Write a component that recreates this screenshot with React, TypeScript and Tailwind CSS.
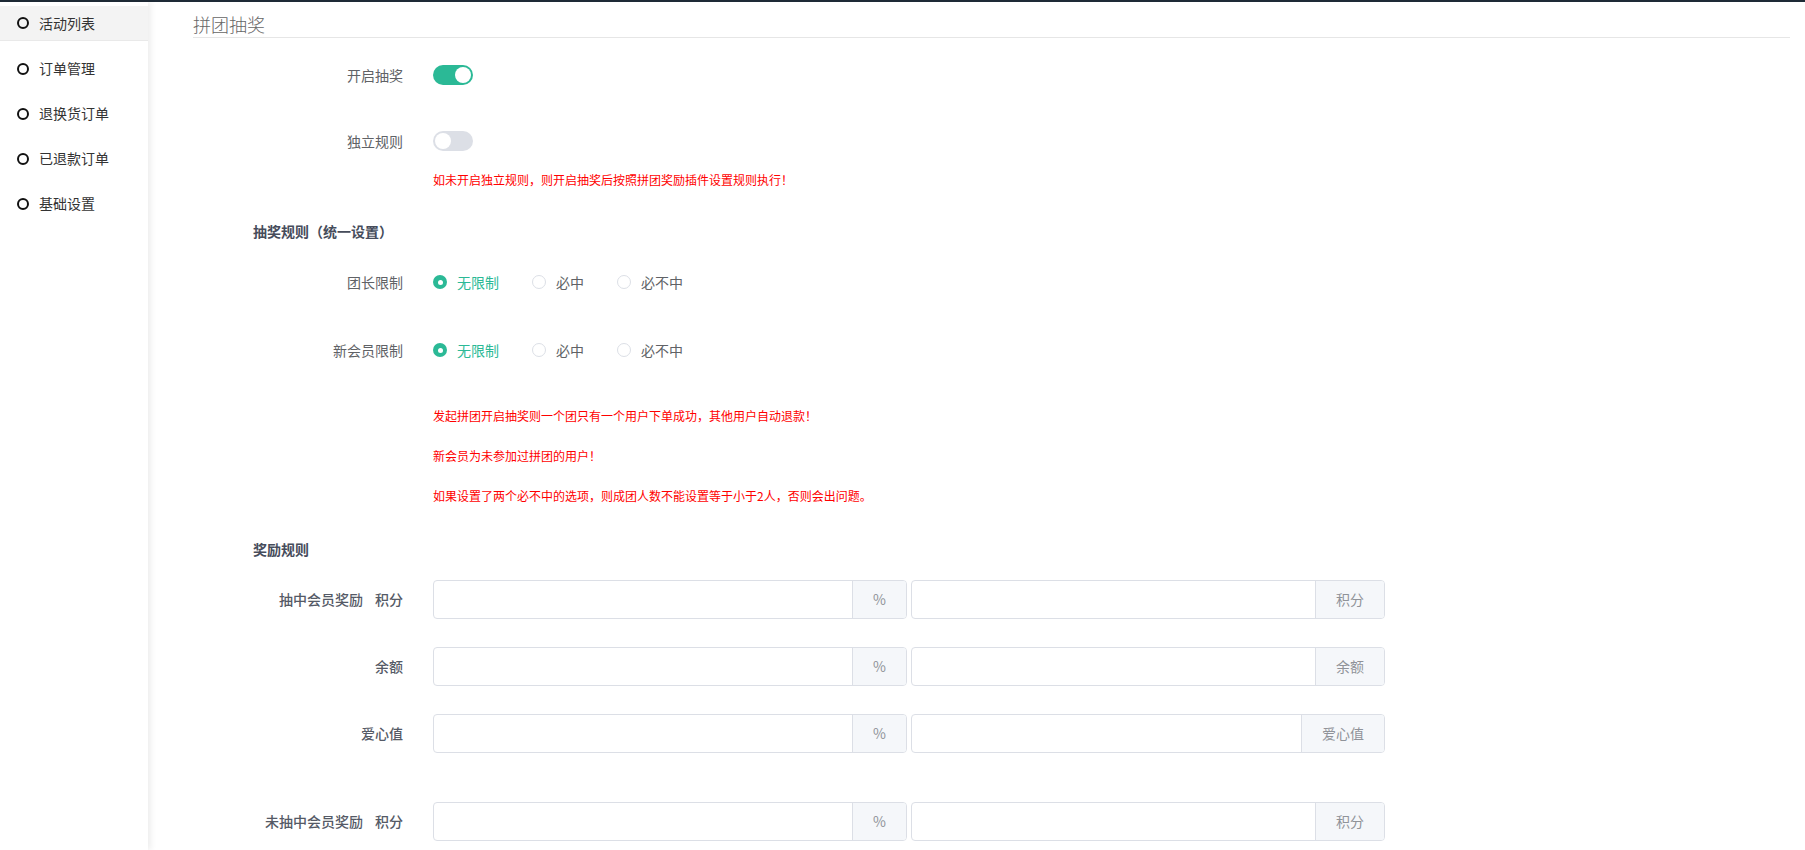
import React from 'react';

const menu = ['活动列表', '订单管理', '退换货订单', '已退款订单', '基础设置'];

function Toggle({ on }: { on: boolean }) {
  return (
    <span className={on ? 'relative inline-block w-[40px] h-[20px] rounded-full bg-[#2bb996]' : 'relative inline-block w-[40px] h-[20px] rounded-full bg-[#dcdfe6]'}>
      <span className={on ? 'absolute top-[2px] left-[22px] w-[16px] h-[16px] rounded-full bg-white' : 'absolute top-[2px] left-[2px] w-[16px] h-[16px] rounded-full bg-white'} />
    </span>
  );
}

function Radio({ label, checked }: { label: string; checked?: boolean }) {
  return (
    <label className="flex items-center mr-[33px] cursor-pointer">
      {checked ? (
        <span className="w-[14px] h-[14px] rounded-full bg-[#2bb996] flex items-center justify-center">
          <span className="w-[5px] h-[5px] rounded-full bg-white" />
        </span>
      ) : (
        <span className="w-[14px] h-[14px] rounded-full border border-[#dcdfe6] bg-white" />
      )}
      <span className={checked ? 'pl-[10px] text-[14px] text-[#2bb996]' : 'pl-[10px] text-[14px] text-[#606266]'}>{label}</span>
    </label>
  );
}

function FormRow({ label, children, className = '', strong = false }: { label: React.ReactNode; children: React.ReactNode; className?: string; strong?: boolean }) {
  return (
    <div className={'flex items-center ' + className}>
      <div className={strong ? 'w-[210px] text-right text-[14px] text-[#555a66] font-medium' : 'w-[210px] text-right text-[14px] text-[#606266]'}>{label}</div>
      <div className="ml-[30px] flex items-center h-full">{children}</div>
    </div>
  );
}

function InputGroup({ unit }: { unit: string }) {
  return (
    <div className="flex w-[474px] h-[39px] border border-[#dcdfe6] rounded-[4px] overflow-hidden bg-white">
      <input className="flex-1 min-w-0 outline-none px-[15px] text-[14px]" />
      <div className="px-[20px] flex items-center bg-[#f5f7fa] border-l border-[#dcdfe6] text-[14px] text-[#909399]">{unit}</div>
    </div>
  );
}

function RewardRow({ label, unit, className }: { label: React.ReactNode; unit: string; className: string }) {
  return (
    <FormRow label={label} strong className={'h-[39px] ' + className}>
      <div className="flex gap-[4px]">
        <InputGroup unit="%" />
        <InputGroup unit={unit} />
      </div>
    </FormRow>
  );
}

export default function App() {
  return (
    <div className="h-screen flex flex-col bg-white overflow-hidden font-['Noto_Sans_CJK_SC','Noto_Sans',sans-serif]">
      <div className="h-[2px] bg-[#1e2a36] shrink-0" />
      <div className="flex flex-1 min-h-0">
        <aside className="w-[148px] shrink-0 bg-white pt-[4px] relative z-10 shadow-[3px_0_6px_rgba(0,0,0,0.07)]">
          {menu.map((m, i) => (
            <div
              key={m}
              className={i === 0 ? 'h-[35px] mb-[10px] flex items-center pl-[17px] bg-[#f3f3f3] border-b border-[#e9e9e9]' : 'h-[35px] mb-[10px] flex items-center pl-[17px]'}
            >
              <span className="w-[12px] h-[12px] rounded-full border-[2px] border-[#111]" />
              <span className="ml-[10px] text-[14px] text-[#333]">{m}</span>
            </div>
          ))}
        </aside>

        <main className="flex-1 pl-[45px] pr-[15px] overflow-hidden">
          <div className="pt-[10px] leading-[25px] border-b border-[#e6e6e6] text-[18px] text-[#666] font-light">拼团抽奖</div>

          <FormRow label="开启抽奖" className="h-[40px] mt-[17px]">
            <Toggle on />
          </FormRow>
          <FormRow label="独立规则" className="h-[40px] mt-[26px]">
            <Toggle on={false} />
          </FormRow>
          <p className="ml-[240px] mt-[9px] leading-[20px] text-[12px] text-[#ff0000]">如未开启独立规则，则开启抽奖后按照拼团奖励插件设置规则执行！</p>

          <h3 className="ml-[60px] mt-[31px] leading-[20px] text-[14px] font-semibold text-[#464c5b]">抽奖规则（统一设置）</h3>

          <FormRow label="团长限制" className="h-[40px] mt-[21px]">
            <Radio label="无限制" checked />
            <Radio label="必中" />
            <Radio label="必不中" />
          </FormRow>
          <FormRow label="新会员限制" className="h-[40px] mt-[28px]">
            <Radio label="无限制" checked />
            <Radio label="必中" />
            <Radio label="必不中" />
          </FormRow>

          <div className="ml-[240px] mt-[26px] text-[12px] text-[#ff0000] leading-[40px]">
            <p>发起拼团开启抽奖则一个团只有一个用户下单成功，其他用户自动退款！</p>
            <p>新会员为未参加过拼团的用户！</p>
            <p>如果设置了两个必不中的选项，则成团人数不能设置等于小于2人，否则会出问题。</p>
          </div>

          <h3 className="ml-[60px] mt-[23px] leading-[20px] text-[14px] font-semibold text-[#464c5b]">奖励规则</h3>

          <RewardRow label={<><span>抽中会员奖励</span><span className="ml-[12px]">积分</span></>} unit="积分" className="mt-[21px]" />
          <RewardRow label="余额" unit="余额" className="mt-[28px]" />
          <RewardRow label="爱心值" unit="爱心值" className="mt-[28px]" />
          <RewardRow label={<><span>未抽中会员奖励</span><span className="ml-[12px]">积分</span></>} unit="积分" className="mt-[49px]" />
        </main>
      </div>
    </div>
  );
}
